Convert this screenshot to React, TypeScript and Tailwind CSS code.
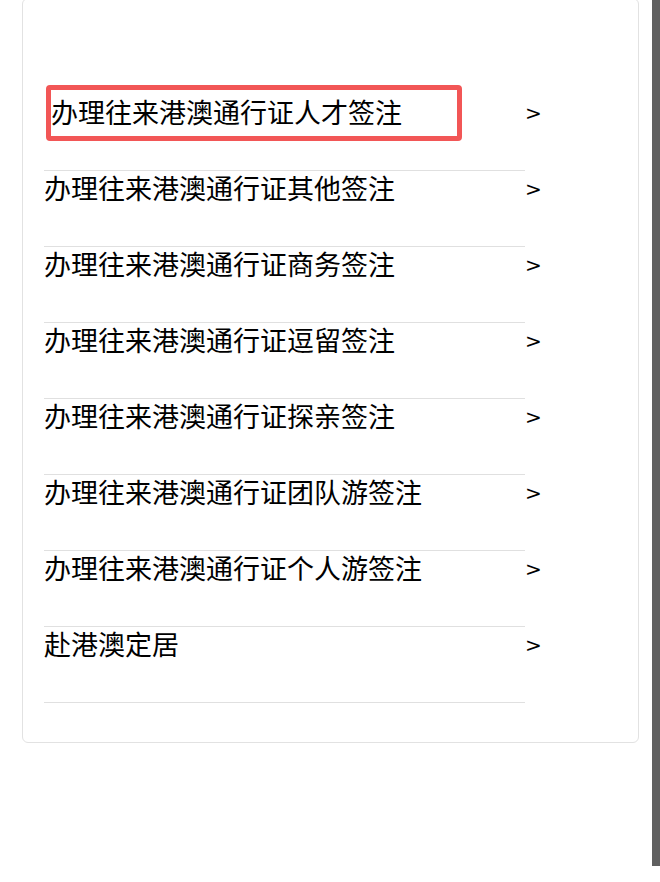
const items = [
  "办理往来港澳通行证人才签注",
  "办理往来港澳通行证其他签注",
  "办理往来港澳通行证商务签注",
  "办理往来港澳通行证逗留签注",
  "办理往来港澳通行证探亲签注",
  "办理往来港澳通行证团队游签注",
  "办理往来港澳通行证个人游签注",
  "赴港澳定居",
];

export default function App() {
  return (
    <div className="flex h-[882px] w-[660px] overflow-hidden bg-white font-['Noto_Sans_CJK_SC','Noto_Sans',sans-serif] text-black">
      <div className="flex-1 pl-[22px] pr-[13px]">
        <div className="-mt-[2px] rounded-[6px] border border-[#e2e2e2] pb-[39px] pl-[21px] pt-[95px]">
          <ul>
            {items.map((item, idx) => (
              <li key={item} className="flex h-[76px]">
                <div
                  className={`relative w-[481px] border-t ${
                    idx === 0 ? "border-transparent" : "border-[#e0e0e0]"
                  }`}
                >
                  <span
                    className={`block text-[27px] leading-[34px] ${idx === 0 ? "pl-[7px]" : ""}`}
                  >
                    {item}
                  </span>
                  {idx === 0 && (
                    <div className="absolute left-[2px] top-[-10px] h-[56px] w-[416px] rounded-[4px] border-[5px] border-[#f25656]" />
                  )}
                </div>
                <span className="pt-[2px] font-['DejaVu_Sans',sans-serif] text-[20px] leading-[34px]">
                  &gt;
                </span>
              </li>
            ))}
            <li className="w-[481px] border-t border-[#e0e0e0]" />
          </ul>
        </div>
      </div>
      <div className="h-[866px] w-[8px] bg-[#606060]" />
    </div>
  );
}
